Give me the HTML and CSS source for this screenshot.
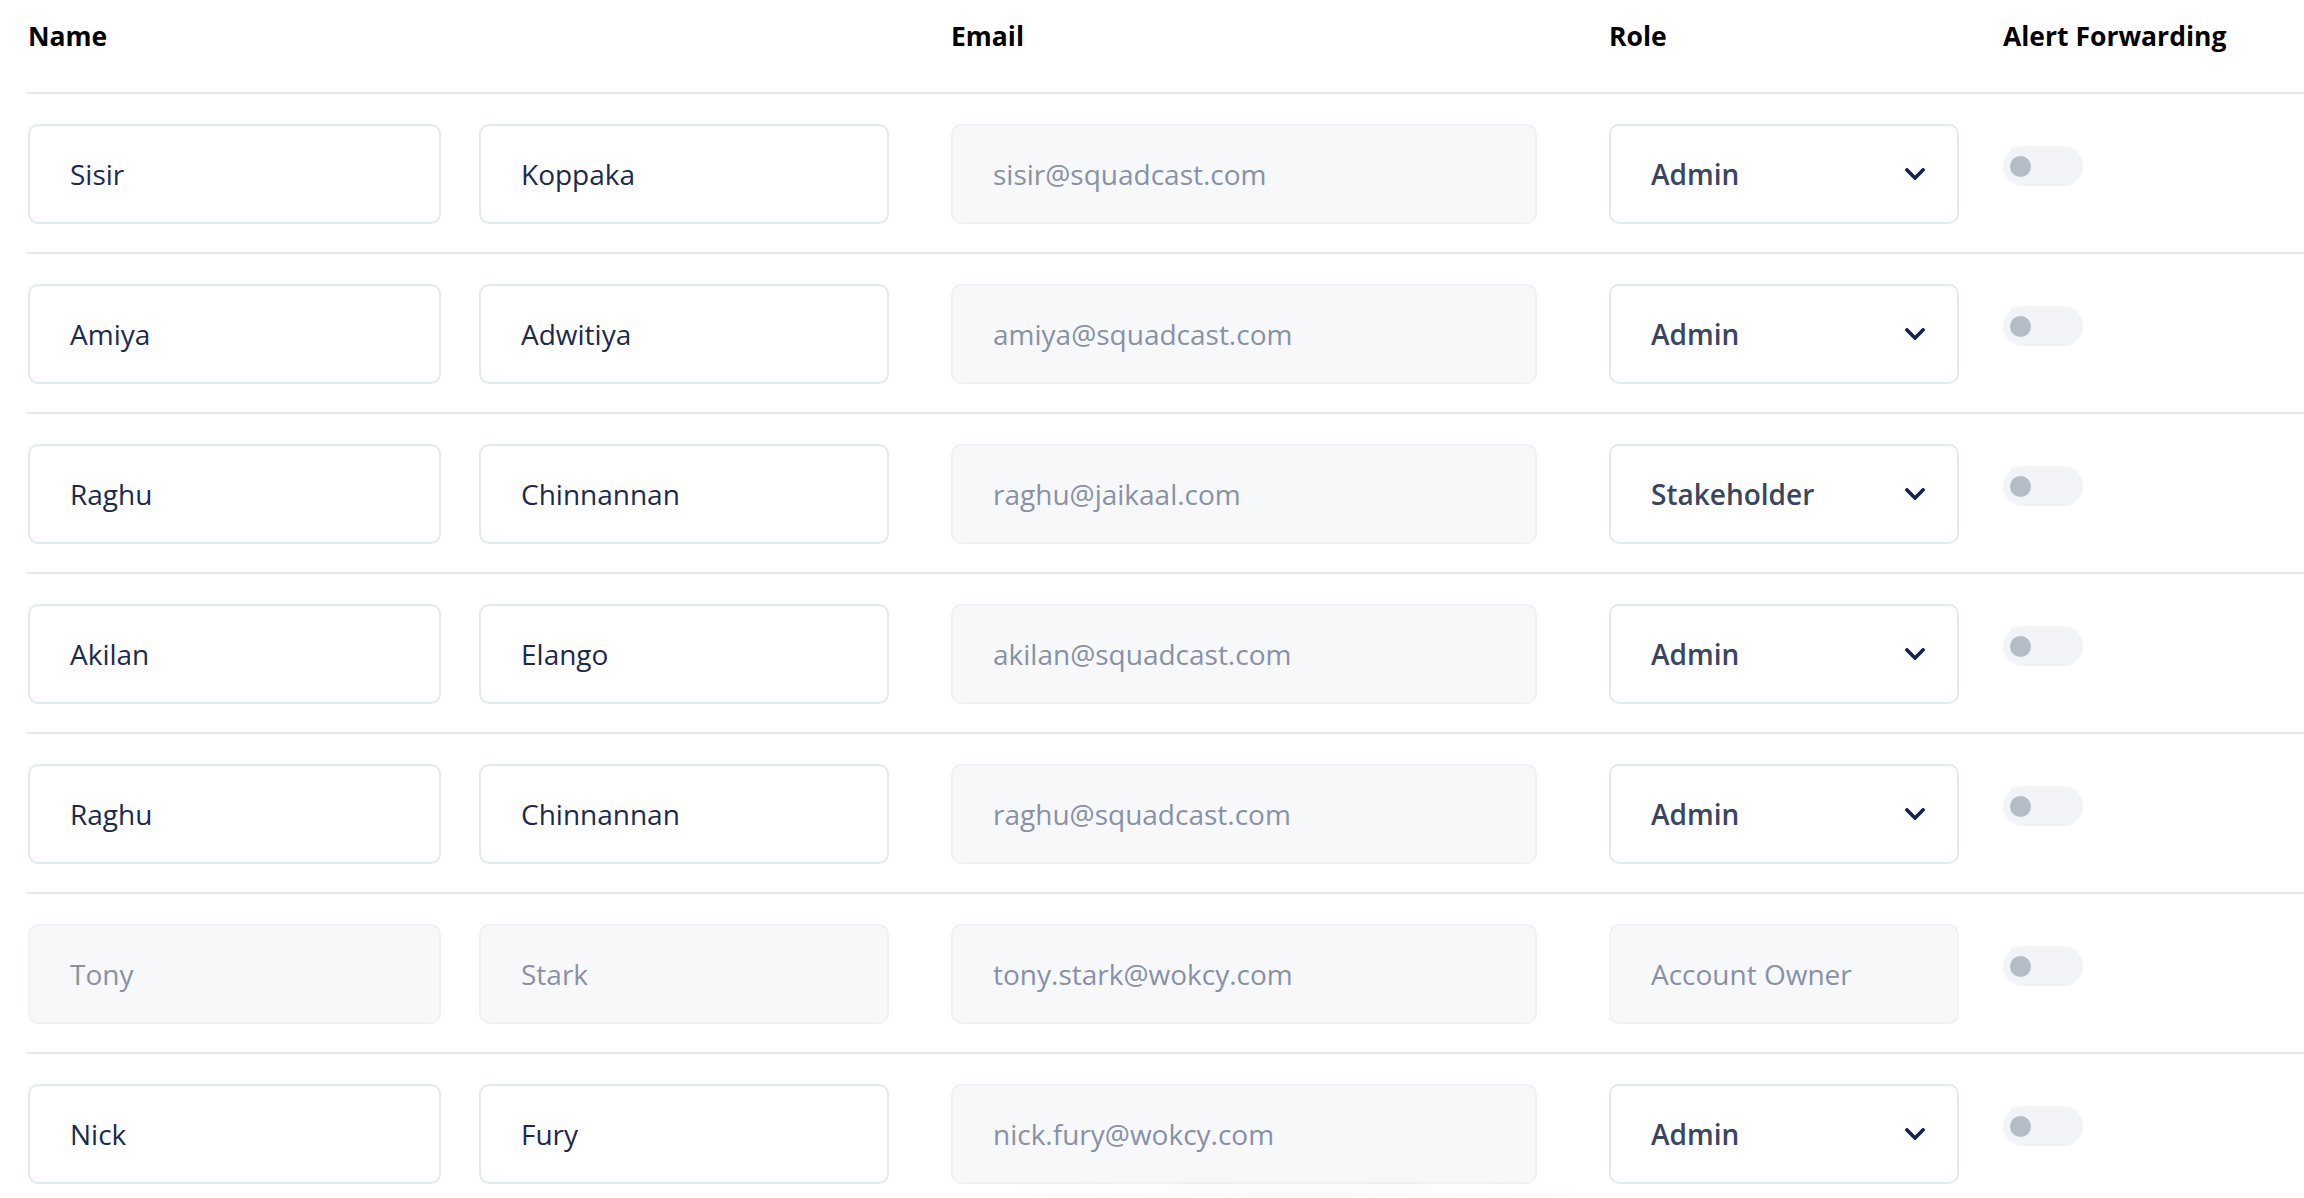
FILE: index.html
```html
<!DOCTYPE html>
<html lang="en">
<head>
<meta charset="utf-8">
<title>Users</title>
<link rel="stylesheet" href="styles.css">
</head>
<body>
<div class="table">
  <div class="row head">
    <div class="h-name">Name</div>
    <div class="h-email">Email</div>
    <div class="h-role">Role</div>
    <div class="h-alert">Alert Forwarding</div>
  </div>

  <div class="row">
    <div class="field first">Sisir</div>
    <div class="field last">Koppaka</div>
    <div class="field email off">sisir@squadcast.com</div>
    <div class="field role"><span>Admin</span><svg class="chev" viewBox="0 0 20 12"><path d="M2 2 L10 10 L18 2"/></svg></div>
    <div class="alert"><span class="toggle"><span class="knob"></span></span></div>
  </div>

  <div class="row">
    <div class="field first">Amiya</div>
    <div class="field last">Adwitiya</div>
    <div class="field email off">amiya@squadcast.com</div>
    <div class="field role"><span>Admin</span><svg class="chev" viewBox="0 0 20 12"><path d="M2 2 L10 10 L18 2"/></svg></div>
    <div class="alert"><span class="toggle"><span class="knob"></span></span></div>
  </div>

  <div class="row">
    <div class="field first">Raghu</div>
    <div class="field last">Chinnannan</div>
    <div class="field email off">raghu@jaikaal.com</div>
    <div class="field role"><span>Stakeholder</span><svg class="chev" viewBox="0 0 20 12"><path d="M2 2 L10 10 L18 2"/></svg></div>
    <div class="alert"><span class="toggle"><span class="knob"></span></span></div>
  </div>

  <div class="row">
    <div class="field first">Akilan</div>
    <div class="field last">Elango</div>
    <div class="field email off">akilan@squadcast.com</div>
    <div class="field role"><span>Admin</span><svg class="chev" viewBox="0 0 20 12"><path d="M2 2 L10 10 L18 2"/></svg></div>
    <div class="alert"><span class="toggle"><span class="knob"></span></span></div>
  </div>

  <div class="row">
    <div class="field first">Raghu</div>
    <div class="field last">Chinnannan</div>
    <div class="field email off">raghu@squadcast.com</div>
    <div class="field role"><span>Admin</span><svg class="chev" viewBox="0 0 20 12"><path d="M2 2 L10 10 L18 2"/></svg></div>
    <div class="alert"><span class="toggle"><span class="knob"></span></span></div>
  </div>

  <div class="row">
    <div class="field first off">Tony</div>
    <div class="field last off">Stark</div>
    <div class="field email off">tony.stark@wokcy.com</div>
    <div class="field role off"><span>Account Owner</span></div>
    <div class="alert"><span class="toggle"><span class="knob"></span></span></div>
  </div>

  <div class="row">
    <div class="field first">Nick</div>
    <div class="field last">Fury</div>
    <div class="field email off">nick.fury@wokcy.com</div>
    <div class="field role"><span>Admin</span><svg class="chev" viewBox="0 0 20 12"><path d="M2 2 L10 10 L18 2"/></svg></div>
    <div class="alert"><span class="toggle"><span class="knob"></span></span></div>
  </div>
</div>
<div class="fade"></div>
</body>
</html>
```

FILE: styles.css
```css
html, body {
  margin: 0;
  padding: 0;
  background: #ffffff;
  overflow: hidden;
}
body {
  position: relative;
  font-family: "Open Sans", "Lato", sans-serif;
  width: 2304px;
  height: 1198px;
}
.table {
  margin-left: 26px;
  display: flex;
  flex-direction: column;
}
.row {
  display: grid;
  grid-template-columns: 413px 448px 720px 394px 1fr;
  align-items: start;
  padding: 30px 0 28px 2px;
  border-bottom: 2px solid #e6e9ef;
}
.row.head {
  grid-template-columns: 923px 658px 394px 1fr;
  padding: 18px 0 0 2px;
  height: 74px;
  font-weight: 700;
  font-size: 26.5px;
  line-height: 36px;
  color: #000;
}
.field {
  box-sizing: border-box;
  height: 100px;
  border: 2px solid #e4e8f1;
  border-radius: 10px;
  background: #fff;
  padding: 0 0 0 40px;
  display: flex;
  align-items: center;
  font-size: 28px;
  color: #1b2a4e;
  white-space: nowrap;
}
.field.first { width: 413px; }
.field.last { margin-left: 38px; width: 410px; }
.field.email { margin-left: 62px; width: 586px; }
.field.role {
  width: 350px;
  justify-content: space-between;
  padding-right: 32px;
  font-weight: 600;
  color: #3a465f;
}
.field.off {
  background: #f7f8fa;
  border-color: #eff1f5;
  color: #8891a6;
  font-weight: 400;
}
.chev {
  width: 20px;
  height: 12px;
  fill: none;
  stroke: #13224a;
  stroke-width: 3.6;
  stroke-linecap: square;
}
.alert {
  padding-top: 22px;
}
.toggle {
  display: flex;
  align-items: center;
  width: 80px;
  height: 40px;
  border-radius: 20px;
  background: #f1f3f6;
  box-sizing: border-box;
  padding-left: 7px;
}
.knob {
  width: 21px;
  height: 21px;
  border-radius: 50%;
  background: #b6bbc8;
}
.fade {
  position: absolute;
  left: 900px;
  top: 1150px;
  width: 800px;
  height: 100px;
  background: radial-gradient(ellipse 50% 55% at 50% 75%, rgba(30, 40, 70, 0.045), rgba(30, 40, 70, 0) 100%);
  pointer-events: none;
}
```
